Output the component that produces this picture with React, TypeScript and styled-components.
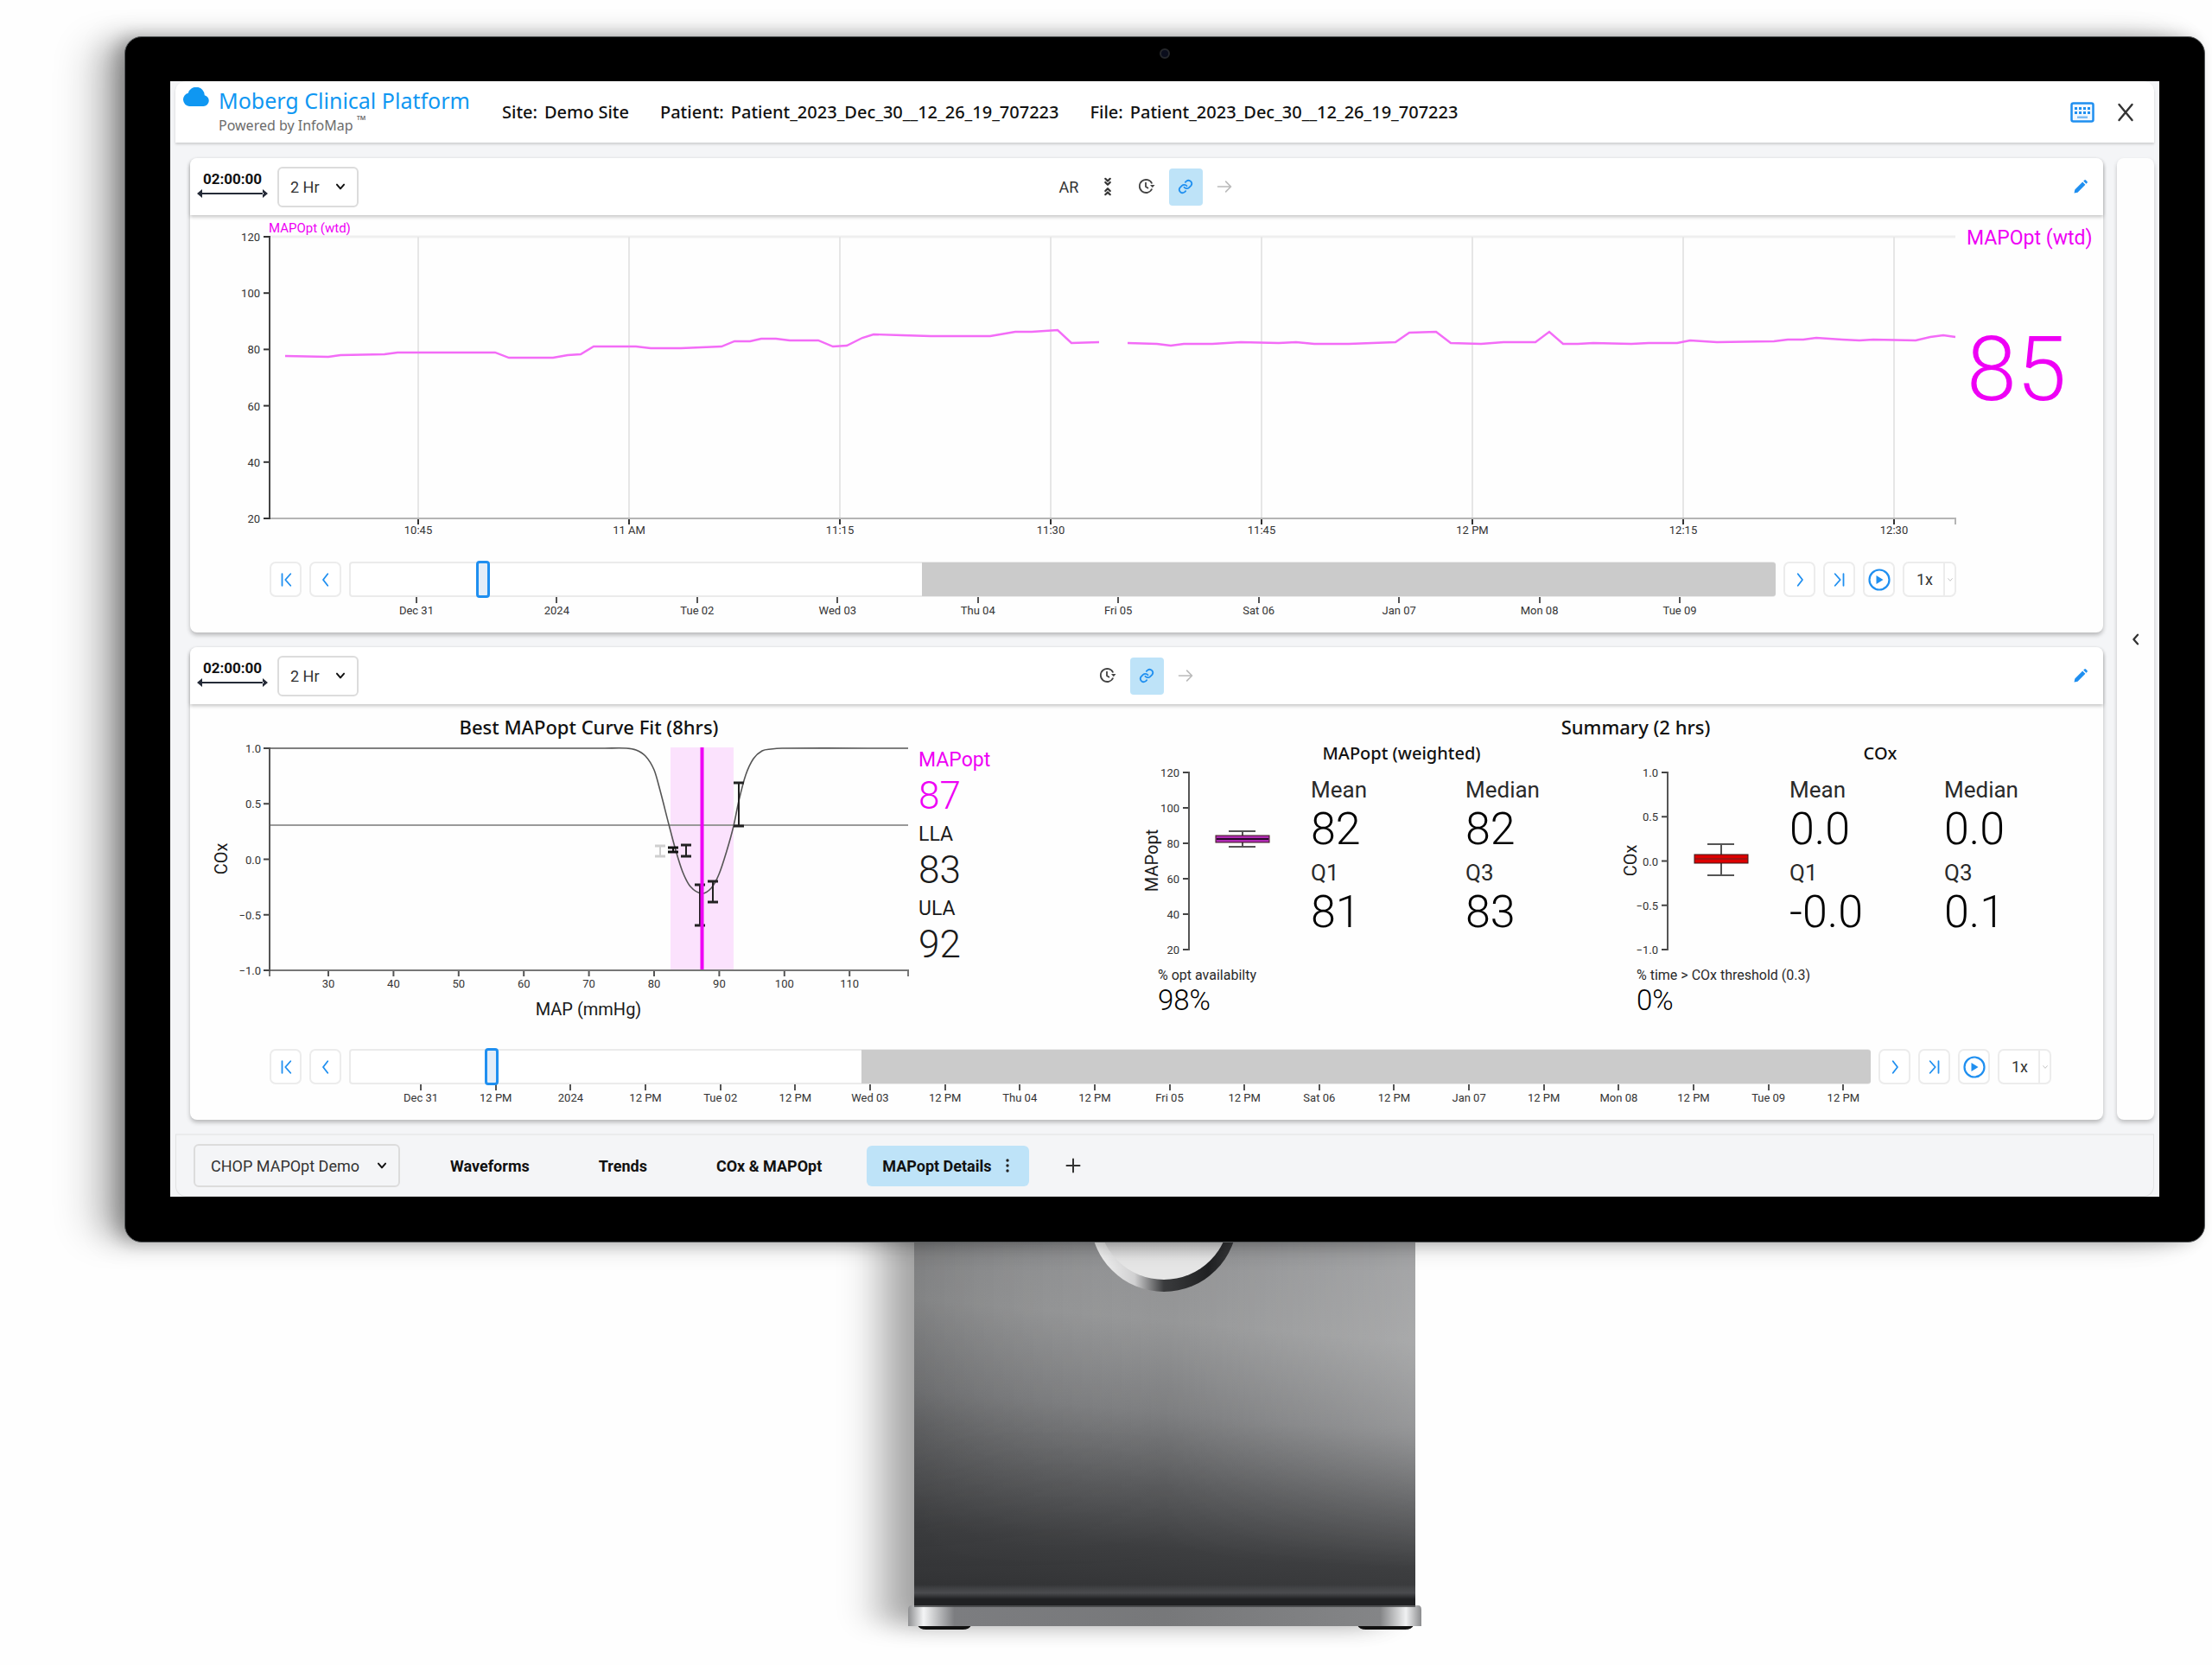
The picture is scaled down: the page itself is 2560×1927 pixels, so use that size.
import React from "react";
import styled, { createGlobalStyle } from "styled-components";

const BLUE = "#1f8ff0";
const MAGENTA = "#ee00f5";
const UI_FONT = 'Roboto, "Open Sans", sans-serif';
const HEADING_FONT = '"Noto Sans", "Open Sans", sans-serif';

const GlobalStyle = createGlobalStyle`
  *, *::before, *::after { box-sizing: border-box; }
  body { margin: 0; background: #fefefe; color: #111; font-family: ${UI_FONT}; }
  button, select, input { font: inherit; color: inherit; margin: 0; }
  h1, h2, h3, p, dl, dd, dt { margin: 0; font-weight: 400; }
`;

/* ---------- device ---------- */

const Stage = styled.div`
  display: flex;
  flex-direction: column;
  align-items: center;
  padding: 42px 8px 41px 144px;
  overflow: hidden;
`;

const Monitor = styled.div`
  position: relative;
  z-index: 1;
  display: flex;
  flex-direction: column;
  width: 100%;
  padding: 0 52px 52px;
  border: 1px solid #55585a;
  border-radius: 20px;
  background: #000;
  box-shadow: -52px 0 44px -8px rgba(0, 0, 0, 0.14), -24px 0 32px -4px rgba(0, 0, 0, 0.24), -8px 0 18px 0 rgba(0, 0, 0, 0.2);
`;

const CameraBar = styled.div`
  display: flex;
  align-items: center;
  justify-content: center;
  height: 51px;
  padding-bottom: 14px;
`;

const Camera = styled.span`
  width: 12px;
  height: 12px;
  border: 2px solid #26282c;
  border-radius: 50%;
  background: #0a0d1c;
`;

const Screen = styled.div`
  display: flex;
  flex-direction: column;
  padding: 0 6px;
  background: #f4f5f7;
`;

const StandDrawing = styled.svg`
  display: block;
  width: 660px;
  height: 448px;
  overflow: visible;
`;

/* ---------- header ---------- */

const Header = styled.header`
  display: flex;
  align-items: center;
  height: 71px;
  padding: 0 14px 0 9px;
  border-radius: 12px 12px 0 0;
  background: #fff;
  box-shadow: 0 2px 3px rgba(0, 0, 0, 0.16);
`;

const Brand = styled.div`
  display: flex;
  align-items: flex-start;
  gap: 11px;
  width: 369px;
`;

const BrandText = styled.div`
  display: flex;
  flex-direction: column;
  font-family: ${HEADING_FONT};
`;

const BrandName = styled.h1`
  font-size: 25px;
  line-height: 30px;
  color: #0f97f2;
  white-space: nowrap;
`;

const Powered = styled.p`
  font-size: 16px;
  line-height: 28px;
  color: #6c6c6c;
  sup { font-size: 14px; line-height: 10px; margin-left: 4px; }
`;

const Facts = styled.dl`
  display: flex;
  flex: 1;
  gap: 36px;
  font-family: ${HEADING_FONT};
  font-size: 20px;
  font-weight: 500;
  line-height: 28px;
  white-space: nowrap;
`;

const Fact = styled.div`
  display: flex;
  gap: 8px;
  dt, dd { font-weight: 500; }
`;

const HeaderActions = styled.div`
  display: flex;
  align-items: center;
  gap: 11px;
`;

const IconButton = styled.button<{ $active?: boolean; $tone?: string }>`
  display: inline-flex;
  align-items: center;
  justify-content: center;
  width: 39px;
  height: 43px;
  padding: 0;
  border: 0;
  border-radius: 4px;
  background: ${(p) => (p.$active ? "#bee3f8" : "transparent")};
  color: ${(p) => p.$tone || "#333"};
  font-size: 18px;
`;

/* ---------- panels ---------- */

const Main = styled.main`
  display: flex;
  gap: 16px;
  padding: 18px 0 16px 17px;
`;

const Panels = styled.div`
  display: flex;
  flex: 1;
  flex-direction: column;
  gap: 17px;
  min-width: 0;
`;

const Panel = styled.section`
  display: flex;
  flex-direction: column;
  border-radius: 8px;
  background: #fefefe;
  box-shadow: 0 3px 5px rgba(0, 0, 0, 0.25);
`;

const SideRail = styled.aside`
  display: flex;
  align-items: center;
  justify-content: center;
  width: 43px;
  border-radius: 8px;
  background: #fefefe;
  box-shadow: 0 3px 5px rgba(0, 0, 0, 0.22);
`;

const Toolbar = styled.div`
  display: grid;
  grid-template-columns: 1fr auto 1fr;
  align-items: center;
  height: 66px;
  padding: 0 7px;
  border-radius: 8px 8px 0 0;
  background: #fff;
  box-shadow: 0 2px 4px rgba(0, 0, 0, 0.24);
`;

const ToolGroup = styled.div<{ $end?: boolean }>`
  display: flex;
  align-items: center;
  gap: 6px;
  justify-content: ${(p) => (p.$end ? "flex-end" : "flex-start")};
`;

const Span = styled.div`
  display: flex;
  flex-direction: column;
  align-items: center;
  width: 84px;
  margin-right: 4px;
  padding-bottom: 5px;
  font-size: 17px;
  font-weight: 700;
  line-height: 21px;
`;

const SelectBox = styled.label<{ $width: number; $height: number; $plain?: boolean }>`
  position: relative;
  display: flex;
  align-items: center;
  width: ${(p) => p.$width}px;
  height: ${(p) => p.$height}px;
  border: 2px solid #dcdcdc;
  border-radius: 6px;
  background: ${(p) => (p.$plain ? "transparent" : "#fff")};
  svg { position: absolute; right: 12px; pointer-events: none; }
`;

const Select = styled.select<{ $pad: number }>`
  width: 100%;
  height: 100%;
  padding: 0 0 0 ${(p) => p.$pad}px;
  border: 0;
  background: transparent;
  appearance: none;
  font-size: 18px;
  color: #333;
`;

const TrendBody = styled.div`
  display: grid;
  grid-template-columns: minmax(0, 1fr) 168px;
`;

const Drawing = styled.svg`
  display: block;
  width: 100%;
  height: auto;
`;

const Tick = styled.text`
  font-family: ${UI_FONT};
  font-size: 13px;
  fill: #333;
`;

const AxisTitle = styled.text`
  font-family: ${UI_FONT};
  font-size: 20px;
  fill: #1a1a1a;
`;

const SeriesName = styled.text`
  font-family: ${UI_FONT};
  font-size: 15px;
  fill: ${MAGENTA};
`;

const TrendReading = styled.div`
  display: flex;
  flex-direction: column;
  gap: 76px;
  padding: 11px 0 0 10px;
  color: ${MAGENTA};
  white-space: nowrap;
`;

const ReadingName = styled.p`
  font-size: 23px;
  line-height: 32px;
`;

const ReadingValue = styled.p`
  font-size: 104px;
  font-weight: 300;
  line-height: 120px;
`;

/* ---------- timeline ---------- */

const TimelineRow = styled.div<{ $right: number; $top: number }>`
  display: flex;
  align-items: flex-start;
  gap: 9px;
  height: 82px;
  margin-top: ${(p) => p.$top}px;
  padding: 0 ${(p) => p.$right}px 0 92px;
`;

const StepButton = styled.button`
  display: inline-flex;
  align-items: center;
  justify-content: center;
  width: 37px;
  height: 41px;
  padding: 0;
  border: 2px solid #ececec;
  border-radius: 7px;
  background: #fff;
  color: ${BLUE};
`;

const TrackArea = styled.div`
  position: relative;
  flex: 1;
`;

const Track = styled.div`
  display: flex;
  justify-content: flex-end;
  height: 41px;
  border: 2px solid #ebebeb;
  border-radius: 4px;
  background: #fff;
`;

const Unloaded = styled.div`
  margin: -1px -2px -1px 0;
  border-radius: 0 3px 3px 0;
  background: #cbcbcb;
`;

const Scrubber = styled.input`
  position: absolute;
  top: -1px;
  left: 0;
  width: 100%;
  height: 43px;
  background: transparent;
  appearance: none;
  &::-webkit-slider-thumb {
    appearance: none;
    width: 16px;
    height: 43px;
    border: 3px solid ${BLUE};
    border-radius: 4px;
    background: #e3edf8;
  }
`;

const TimeMark = styled.span`
  position: absolute;
  top: 41px;
  display: flex;
  flex-direction: column;
  align-items: center;
  width: 80px;
  margin-left: -40px;
  font-size: 13px;
  line-height: 18px;
  color: #333;
  &::before { content: ""; width: 2px; height: 7px; background: #555; }
`;

const SpeedBox = styled(SelectBox)`
  border-color: #ececec;
  border-radius: 7px;
  color: #c4c4c4;
  &::after { content: ""; position: absolute; right: 11px; width: 2px; height: 100%; background: #ececec; }
  svg { right: 1px; }
`;

/* ---------- details panel ---------- */

const DetailBody = styled.div`
  display: grid;
  grid-template-columns: minmax(0, 835fr) minmax(0, 265fr) minmax(0, 1114fr);
  padding-top: 11px;
`;

const FigureTitle = styled.h2<{ $left: number }>`
  padding-left: ${(p) => p.$left}px;
  font-family: ${HEADING_FONT};
  font-size: 22px;
  font-weight: 500;
  line-height: 30px;
  text-align: center;
`;

const Limits = styled.dl`
  padding: 39px 0 0 8px;
`;

const Limit = styled.div<{ $tone?: string }>`
  color: ${(p) => p.$tone || "#1a1a1a"};
  dt { font-size: 23px; line-height: 30px; }
  dd { padding-bottom: 4px; font-size: 44px; font-weight: 300; line-height: 52px; }
`;

const Summary = styled.div`
  padding-right: 6px;
`;

const SummaryColumns = styled.div`
  display: grid;
  grid-template-columns: 1fr 1fr;
`;

const GroupTitle = styled.h3`
  padding: 2px 0 0 50px;
  font-family: ${HEADING_FONT};
  font-size: 20px;
  font-weight: 500;
  line-height: 28px;
  text-align: center;
`;

const GroupBody = styled.div`
  display: grid;
  grid-template-columns: 197px 1fr;
`;

const Stats = styled.dl`
  display: grid;
  grid-template-columns: 179px 1fr;
  align-content: start;
  padding-top: 11px;
`;

const Stat = styled.div`
  dt { font-size: 26px; line-height: 34px; color: #2a2a2a; }
  dd { padding-bottom: 4px; font-size: 52px; font-weight: 300; line-height: 58px; color: #000; }
`;

const Share = styled.dl`
  padding: 2px 0 0 20px;
  dt { font-size: 16px; line-height: 20px; color: #2a2a2a; }
  dd { font-size: 33px; font-weight: 300; line-height: 38px; color: #000; }
`;

/* ---------- footer ---------- */

const Footer = styled.footer`
  display: flex;
  align-items: center;
  height: 73px;
  padding-left: 20px;
  border: 1px solid #e2e3e4;
  border-top: 2px solid #eaebec;
  border-radius: 0 0 12px 12px;
`;

const Tabs = styled.nav`
  display: flex;
  gap: 44px;
  margin-left: 40px;
`;

const Tab = styled.button<{ $active?: boolean }>`
  display: inline-flex;
  align-items: center;
  gap: 11px;
  height: 47px;
  padding: 0 18px;
  margin-left: ${(p) => (p.$active ? "-10px" : "0")};
  border: 0;
  border-radius: 6px;
  background: ${(p) => (p.$active ? "#bee3f8" : "transparent")};
  font-size: 18px;
  font-weight: 700;
  color: #111;
`;

const AddButton = styled(IconButton)`
  margin-left: 32px;
`;

/* ---------- icons ---------- */

const Stroke = ({ d, size = 20, width = 2, vb = 24 }: { d: string; size?: number; width?: number; vb?: number }) => (
  <svg width={size} height={size} viewBox={`0 0 ${vb} ${vb}`} fill="none" stroke="currentColor" strokeWidth={width} strokeLinecap="round" strokeLinejoin="round" aria-hidden="true">
    <path d={d} />
  </svg>
);

const Chevron = ({ size = 18 }: { size?: number }) => <Stroke size={size} width={3.4} d="M5 8l7 8 7-8" />;

const CloudIcon = () => (
  <svg width="30" height="22" viewBox="0 0 30 22" fill="#0f97f2" aria-hidden="true">
    <path d="M7 22h16.500a6.500 6.500 0 0 0 1.300-12.800a9.700 9.700 0 0 0-19-2.500A7.800 7.800 0 0 0 7 22z" />
  </svg>
);

const KeyboardIcon = () => (
  <svg width="28" height="24" viewBox="0 0 28 24" aria-hidden="true">
    <rect x="1.500" y="1.500" width="25" height="21" rx="2" fill="#f2f8fe" stroke={BLUE} strokeWidth="2.500" />
    {[7, 12].map((y) => [5, 10, 15, 20].map((x) => <rect key={`${x}${y}`} x={x} y={y - 1} width="3" height="3" fill={BLUE} />))}
    <rect x="8" y="16.500" width="12" height="2.500" fill="#7dbdf5" />
  </svg>
);

const PencilIcon = () => (
  <svg width="18" height="18" viewBox="0 0 18 18" fill={BLUE} aria-hidden="true">
    <path d="M1.500 16.500l.8-4L11.200 3.600l3.200 3.200L5.500 15.700zM12.200 2.600l1.100-1.100a1.200 1.200 0 0 1 1.700 0l1.500 1.500a1.200 1.200 0 0 1 0 1.700l-1.100 1.100z" />
  </svg>
);

const ClockIcon = () => (
  <svg width="20" height="20" viewBox="0 0 20 20" fill="none" stroke="#444" strokeWidth="1.800" aria-hidden="true">
    <path d="M16.200 12.500A7.500 7.500 0 1 1 16.200 6.500M9 5v5l3 2" />
    <path d="M14 8h5.500l-2.700 3.200z" fill="#444" stroke="none" />
  </svg>
);

const LinkIcon = () => (
  <Stroke size={18} width={2.4} d="M10 13a5 5 0 0 0 7.500.5l3-3a5 5 0 0 0-7-7l-1.700 1.700M14 11a5 5 0 0 0-7.500-.5l-3 3a5 5 0 0 0 7 7l1.700-1.700" />
);

const CompressIcon = () => (
  <Stroke size={22} width={2.4} d="M9 2l3 3 3-3M9 6.500l3 3 3-3M9 17.500l3-3 3 3M9 22l3-3 3 3" />
);

const PlayIcon = () => (
  <svg width="26" height="26" viewBox="0 0 26 26" fill="none" aria-hidden="true">
    <circle cx="13" cy="13" r="11.500" stroke={BLUE} strokeWidth="2.200" />
    <path d="M9.500 8v10l8-5z" fill={BLUE} />
  </svg>
);

const SpanArrow = () => (
  <svg width="84" height="12" viewBox="0 0 84 12" fill="#252b38" aria-hidden="true">
    <path d="M1 6l6-5v10zM83 6l-6-5v10zM6 5h72v2H6z" />
  </svg>
);

/* ---------- data ---------- */

type Pt = [number, number];

const TRACE_A: Pt[] = [
  [330, 412], [380, 413], [394, 411], [445, 410], [460, 408], [573, 408], [589, 414], [640, 414], [657, 411], [672, 410],
  [687, 401], [736, 401], [753, 403], [788, 403], [835, 401], [850, 395], [868, 395], [881, 392], [898, 392], [914, 394],
  [947, 394], [964, 401], [980, 400], [998, 391], [1011, 387], [1044, 388], [1077, 389], [1146, 389], [1175, 384],
  [1194, 384], [1224, 382], [1240, 397], [1272, 396],
];
const TRACE_B: Pt[] = [
  [1305, 397], [1339, 398], [1355, 400], [1370, 398], [1403, 398], [1436, 396], [1480, 397], [1500, 396], [1521, 398],
  [1561, 398], [1615, 396], [1631, 385], [1662, 384], [1679, 397], [1714, 398], [1740, 396], [1777, 396], [1793, 384],
  [1809, 398], [1826, 398], [1844, 397], [1888, 398], [1908, 397], [1941, 397], [1956, 394], [1987, 396], [2053, 395],
  [2069, 393], [2087, 393], [2102, 391], [2132, 393], [2152, 394], [2168, 393], [2217, 394], [2234, 390], [2249, 388], [2263, 390],
];
const CURVE: Pt[] = [
  [312, 867], [700, 867], [725, 867], [736, 869], [747, 876], [757, 892], [764, 916], [774, 955], [782, 985], [790, 1010],
  [799, 1027], [812, 1035], [823, 1029], [832, 1013], [841, 986], [849, 957], [855, 928], [863, 898], [872, 879], [882, 870],
  [892, 868], [905, 867], [1051, 867],
];
const ERROR_BARS = [
  { x: 764, top: 980, bottom: 992, tone: "#cfcfcf" },
  { x: 779, top: 982, bottom: 987, tone: "#111" },
  { x: 794, top: 979, bottom: 992, tone: "#222" },
  { x: 810, top: 1025, bottom: 1072, tone: "#222" },
  { x: 825, top: 1021, bottom: 1045, tone: "#222" },
  { x: 855, top: 907, bottom: 957, tone: "#222" },
];

const line = (pts: Pt[]) => pts.map((p) => p.join(",")).join(" ");

const smooth = (pts: Pt[]) => {
  let d = `M${pts[0][0]} ${pts[0][1]}`;
  for (let i = 0; i < pts.length - 1; i++) {
    const a = pts[Math.max(0, i - 1)];
    const b = pts[i];
    const c = pts[i + 1];
    const e = pts[Math.min(pts.length - 1, i + 2)];
    const reach = Math.abs(c[0] - b[0]) / 3;
    const s1 = (c[1] - a[1]) / (c[0] - a[0] || 1);
    const s2 = (e[1] - b[1]) / (e[0] - b[0] || 1);
    d += ` C${b[0] + reach} ${b[1] + s1 * reach} ${c[0] - reach} ${c[1] - s2 * reach} ${c[0]} ${c[1]}`;
  }
  return d;
};

/* ---------- charts ---------- */

const TrendChart = () => (
  <Drawing viewBox="220 249 2046 390" role="img" aria-label="MAPOpt (wtd) trend">
    <path d="M312 274H2263" stroke="#efefef" strokeWidth="3" />
    {["10:45", "11 AM", "11:15", "11:30", "11:45", "12 PM", "12:15", "12:30"].map((t, i) => {
      const x = Math.round(484 + i * 244);
      return (
        <g key={t}>
          <path d={`M${x} 274V600`} stroke="#e6e6e6" strokeWidth="2" />
          <path d={`M${x} 600v7`} stroke="#333" strokeWidth="2" />
          <Tick x={x} y={618} textAnchor="middle">{t}</Tick>
        </g>
      );
    })}
    <path d="M312 600H2263v7" fill="none" stroke="#b5b5b5" strokeWidth="2" />
    {[120, 100, 80, 60, 40, 20].map((v, i) => {
      const y = 274 + i * 65.2;
      return (
        <g key={v}>
          <path d={`M305 ${y}h8`} stroke="#333" strokeWidth="2" />
          <Tick x={301} y={y + 5} textAnchor="end">{v}</Tick>
        </g>
      );
    })}
    <path d="M312 274V600" stroke="#444" strokeWidth="2" />
    <SeriesName x={311} y={269}>MAPOpt (wtd)</SeriesName>
    <polyline points={line(TRACE_A)} fill="none" stroke="#f36cf7" strokeWidth="2.400" />
    <polyline points={line(TRACE_B)} fill="none" stroke="#f36cf7" strokeWidth="2.400" />
  </Drawing>
);

const CurveChart = () => (
  <Drawing viewBox="220 857 835 328" role="img" aria-label="COx against MAP curve fit">
    <rect x="776" y="866" width="73" height="257" fill="#fbe2fd" />
    <path d="M312 956H1051" stroke="#999" strokeWidth="2" />
    <path d={smooth(CURVE)} fill="none" stroke="#555" strokeWidth="1.6" />
    {ERROR_BARS.map((b) => (
      <g key={b.x} stroke={b.tone}>
        <path d={`M${b.x} ${b.top}V${b.bottom}`} strokeWidth="2" />
        <path d={`M${b.x - 6} ${b.top}h12M${b.x - 6} ${b.bottom}h12`} strokeWidth="3" />
      </g>
    ))}
    <path d="M812.5 866V1123" stroke={MAGENTA} strokeWidth="4" />
    <path d="M312 1124H1051v7M312 1124v7" fill="none" stroke="#777" strokeWidth="2" />
    {["1.0", "0.5", "0.0", "−0.5", "−1.0"].map((t, i) => {
      const y = 867 + i * 64.25;
      return (
        <g key={t}>
          <path d={`M305 ${y}h8`} stroke="#444" strokeWidth="2" />
          <Tick x={302} y={y + 5} textAnchor="end">{t}</Tick>
        </g>
      );
    })}
    <path d="M312 867V1124" stroke="#555" strokeWidth="2" />
    {[30, 40, 50, 60, 70, 80, 90, 100, 110].map((v, i) => {
      const x = 380 + i * 75.4;
      return (
        <g key={v}>
          <path d={`M${x} 1125v6`} stroke="#555" strokeWidth="2" />
          <Tick x={x} y={1144} textAnchor="middle">{v}</Tick>
        </g>
      );
    })}
    <AxisTitle x={681} y={1176} textAnchor="middle">MAP (mmHg)</AxisTitle>
    <AxisTitle transform="translate(263 995) rotate(-90)" textAnchor="middle">COx</AxisTitle>
  </Drawing>
);

interface BoxProps {
  name: string;
  ticks: string[];
  low: number;
  high: number;
  q1: number;
  q3: number;
  median: number;
  fill: string;
  mid: string;
}

const BoxPlot = ({ name, ticks, low, high, q1, q3, median, fill, mid }: BoxProps) => (
  <Drawing viewBox="0 0 197 231" role="img" aria-label={`${name} box plot`}>
    {ticks.map((t, i) => {
      const y = 8 + (i * 205) / (ticks.length - 1);
      return (
        <g key={t}>
          <path d={`M49 ${y}h8`} stroke="#444" strokeWidth="2" />
          <Tick x={45} y={y + 5} textAnchor="end">{t}</Tick>
        </g>
      );
    })}
    <path d="M56 7V214" stroke="#555" strokeWidth="2" />
    <path d={`M118 ${high}V${low}M102 ${high}h31M102 ${low}h31`} stroke="#555" strokeWidth="2" />
    <rect x="87" y={q3} width="62" height={q1 - q3} fill={fill} stroke="#3a1a1a" strokeWidth="1" />
    <path d={`M88 ${median}h60`} stroke={mid} strokeWidth="2" />
    <AxisTitle transform="translate(20 110) rotate(-90)" textAnchor="middle">{name}</AxisTitle>
  </Drawing>
);

/* ---------- composed parts ---------- */

const Timeline = ({ labels, step, unloaded, right, top }: { labels: string[]; step: number; unloaded: number; right: number; top: number }) => (
  <TimelineRow $right={right} $top={top}>
    <StepButton aria-label="First"><Stroke size={18} width={2.4} d="M6 3v18M19 3l-8 9 8 9" /></StepButton>
    <StepButton aria-label="Previous"><Stroke size={18} width={2.4} d="M15 3l-7 9 7 9" /></StepButton>
    <TrackArea>
      <Track>
        <Unloaded style={{ width: `${unloaded}%` }} />
      </Track>
      {labels.map((t, i) => (
        <TimeMark key={i} style={{ left: `${4.72 + i * step}%` }}>{t}</TimeMark>
      ))}
      <Scrubber type="range" min={0} max={1000} defaultValue={90} aria-label="Time window" />
    </TrackArea>
    <StepButton aria-label="Next"><Stroke size={18} width={2.4} d="M9 3l7 9-7 9" /></StepButton>
    <StepButton aria-label="Last"><Stroke size={18} width={2.4} d="M18 3v18M5 3l8 9-8 9" /></StepButton>
    <StepButton aria-label="Play"><PlayIcon /></StepButton>
    <SpeedBox $width={62} $height={41}>
      <Select $pad={14} aria-label="Speed"><option>1x</option></Select>
      <Stroke size={8} width={3} d="M5 8l7 8 7-8" />
    </SpeedBox>
  </TimelineRow>
);

const PanelToolbar = ({ extended }: { extended?: boolean }) => (
  <Toolbar>
    <ToolGroup>
      <Span>02:00:00<SpanArrow /></Span>
      <SelectBox $width={94} $height={47}>
        <Select $pad={13} aria-label="Window length"><option>2 Hr</option></Select>
        <Chevron size={14} />
      </SelectBox>
    </ToolGroup>
    <ToolGroup>
      {extended && <IconButton>AR</IconButton>}
      {extended && <IconButton aria-label="Compress"><CompressIcon /></IconButton>}
      <IconButton aria-label="Time"><ClockIcon /></IconButton>
      <IconButton aria-label="Link" $active $tone={BLUE}><LinkIcon /></IconButton>
      <IconButton aria-label="Forward" $tone="#bbb"><Stroke size={20} d="M3 12h18M14 5l7 7-7 7" /></IconButton>
    </ToolGroup>
    <ToolGroup $end>
      <IconButton aria-label="Edit"><PencilIcon /></IconButton>
    </ToolGroup>
  </Toolbar>
);

const SummaryGroup = ({ title, stats, share, plot }: { title: string; stats: [string, string][]; share: [string, string]; plot: React.ReactNode }) => (
  <div>
    <GroupTitle>{title}</GroupTitle>
    <GroupBody>
      <div>{plot}</div>
      <Stats>
        {stats.map(([k, v]) => (
          <Stat key={k}><dt>{k}</dt><dd>{v}</dd></Stat>
        ))}
      </Stats>
    </GroupBody>
    <Share><dt>{share[0]}</dt><dd>{share[1]}</dd></Share>
  </div>
);

const Stand = () => (
  <StandDrawing viewBox="1018 1438 660 448" aria-hidden="true">
    <defs>
      <linearGradient id="body" x1="0.4" y1="0" x2="0.28" y2="1">
        <stop offset="0" stopColor="#8f9092" />
        <stop offset="0.2" stopColor="#949596" />
        <stop offset="0.45" stopColor="#7b7c7e" />
        <stop offset="0.65" stopColor="#58595b" />
        <stop offset="0.82" stopColor="#3d3e40" />
        <stop offset="1" stopColor="#303133" />
      </linearGradient>
      <linearGradient id="sheen" x1="0" y1="0" x2="1" y2="0">
        <stop offset="0" stopColor="#000" stopOpacity="0.12" />
        <stop offset="0.5" stopColor="#fff" stopOpacity="0.02" />
        <stop offset="1" stopColor="#fff" stopOpacity="0.2" />
      </linearGradient>
      <linearGradient id="sheenFade" x1="0" y1="0" x2="0" y2="1">
        <stop offset="0.5" stopColor="#fff" />
        <stop offset="0.9" stopColor="#000" />
      </linearGradient>
      <mask id="fade"><rect x="1058" y="1438" width="580" height="420" fill="url(#sheenFade)" /></mask>
      <linearGradient id="foot" x1="0" y1="0" x2="1" y2="0">
        <stop offset="0" stopColor="#8e8f91" />
        <stop offset="0.03" stopColor="#f4f5f6" />
        <stop offset="0.09" stopColor="#7c7d80" />
        <stop offset="0.5" stopColor="#77787a" />
        <stop offset="0.92" stopColor="#848587" />
        <stop offset="0.97" stopColor="#f0f1f2" />
        <stop offset="1" stopColor="#8b8c8e" />
      </linearGradient>
      <linearGradient id="ring" x1="0" y1="0" x2="1" y2="0">
        <stop offset="0.05" stopColor="#f4f4f4" />
        <stop offset="0.3" stopColor="#d0d0d1" />
        <stop offset="0.5" stopColor="#3a3b3d" />
        <stop offset="0.8" stopColor="#202123" />
        <stop offset="1" stopColor="#3d3e40" />
      </linearGradient>
      <linearGradient id="hollow" x1="0" y1="0" x2="0" y2="1">
        <stop offset="0.7" stopColor="#cfcfd0" />
        <stop offset="0.85" stopColor="#e6e6e6" />
      </linearGradient>
      <linearGradient id="bend" x1="0" y1="0" x2="0" y2="1">
        <stop offset="0" stopColor="#55575a" stopOpacity="0" />
        <stop offset="0.4" stopColor="#4a4b4e" />
        <stop offset="0.7" stopColor="#202123" />
        <stop offset="1" stopColor="#202123" />
      </linearGradient>
      <filter id="cast" x="-30%" y="-20%" width="160%" height="150%"><feGaussianBlur stdDeviation="22 14" /></filter>
      <clipPath id="below"><rect x="900" y="1438" width="900" height="500" /></clipPath>
    </defs>
    <path d="M1010 1400H1590V1880H1010z" fill="#000" opacity="0.2" filter="url(#cast)" />
    <path d="M1040 1400H1600V1880H1040z" fill="#000" opacity="0.22" filter="url(#cast)" />
    <rect x="1058" y="1438" width="580" height="420" fill="url(#body)" />
    <rect x="1058" y="1438" width="580" height="420" fill="url(#sheen)" mask="url(#fade)" />
    <rect x="1058" y="1834" width="580" height="24" fill="url(#bend)" />
    <g clipPath="url(#below)">
      <circle cx="1347" cy="1410" r="85" fill="url(#ring)" />
      <circle cx="1347" cy="1405" r="76" fill="url(#hollow)" />
    </g>
    <path d="M1062 1881h62q-2 5-10 5h-42q-8 0-10-5zM1571 1881h65q-2 5-10 5h-45q-8 0-10-5z" fill="#111" />
    <path d="M1055 1858h586q4 0 4 5v19h-594v-19q0-5 4-5z" fill="url(#foot)" />
    <path d="M1058 1859h580" stroke="#3a3b3d" strokeWidth="1.5" />
  </StandDrawing>
);

const DAYS = ["Dec 31", "2024", "Tue 02", "Wed 03", "Thu 04", "Fri 05", "Sat 06", "Jan 07", "Mon 08", "Tue 09"];
const HALF_DAYS = DAYS.flatMap((d) => [d, "12 PM"]);
const RECORDING = "Patient_2023_Dec_30__12_26_19_707223";

export default function App() {
  return (
    <Stage>
      <GlobalStyle />
      <Monitor>
        <CameraBar><Camera /></CameraBar>
        <Screen>
          <Header>
            <Brand>
              <CloudIcon />
              <BrandText>
                <BrandName>Moberg Clinical Platform</BrandName>
                <Powered>Powered by InfoMap<sup>™</sup></Powered>
              </BrandText>
            </Brand>
            <Facts>
              <Fact><dt>Site:</dt><dd>Demo Site</dd></Fact>
              <Fact><dt>Patient:</dt><dd>{RECORDING}</dd></Fact>
              <Fact><dt>File:</dt><dd>{RECORDING}</dd></Fact>
            </Facts>
            <HeaderActions>
              <IconButton aria-label="Keyboard"><KeyboardIcon /></IconButton>
              <IconButton aria-label="Close"><Stroke size={24} width={2.4} d="M4.500 3l15 18M19.500 3l-15 18" /></IconButton>
            </HeaderActions>
          </Header>
          <Main>
            <Panels>
              <Panel>
                <PanelToolbar extended />
                <TrendBody>
                  <TrendChart />
                  <TrendReading>
                    <ReadingName>MAPOpt (wtd)</ReadingName>
                    <ReadingValue>85</ReadingValue>
                  </TrendReading>
                </TrendBody>
                <Timeline labels={DAYS} step={9.84} unloaded={60} right={170} top={11} />
              </Panel>
              <Panel>
                <PanelToolbar />
                <DetailBody>
                  <div>
                    <FigureTitle $left={88}>Best MAPopt Curve Fit (8hrs)</FigureTitle>
                    <CurveChart />
                  </div>
                  <Limits>
                    <Limit $tone={MAGENTA}><dt>MAPopt</dt><dd>87</dd></Limit>
                    <Limit><dt>LLA</dt><dd>83</dd></Limit>
                    <Limit><dt>ULA</dt><dd>92</dd></Limit>
                  </Limits>
                  <Summary>
                    <FigureTitle $left={38}>Summary (2 hrs)</FigureTitle>
                    <SummaryColumns>
                      <SummaryGroup
                        title="MAPopt (weighted)"
                        stats={[["Mean", "82"], ["Median", "82"], ["Q1", "81"], ["Q3", "83"]]}
                        share={["% opt availabilty", "98%"]}
                        plot={<BoxPlot name="MAPopt" ticks={["120", "100", "80", "60", "40", "20"]} high={76} low={94} q3={81} q1={89} median={85} fill="#b02cb4" mid="#2a082a" />}
                      />
                      <SummaryGroup
                        title="COx"
                        stats={[["Mean", "0.0"], ["Median", "0.0"], ["Q1", "-0.0"], ["Q3", "0.1"]]}
                        share={["% time > COx threshold (0.3)", "0%"]}
                        plot={<BoxPlot name="COx" ticks={["1.0", "0.5", "0.0", "−0.5", "−1.0"]} high={91} low={127} q3={103} q1={113} median={108} fill="#dc0000" mid="#a01212" />}
                      />
                    </SummaryColumns>
                  </Summary>
                </DetailBody>
                <Timeline labels={HALF_DAYS} step={4.92} unloaded={66.5} right={60} top={30} />
              </Panel>
            </Panels>
            <SideRail>
              <IconButton aria-label="Expand side panel"><Stroke size={16} width={3.4} d="M15 4l-7 8 7 8" /></IconButton>
            </SideRail>
          </Main>
          <Footer>
            <SelectBox $width={239} $height={50} $plain>
              <Select $pad={18} aria-label="Layout"><option>CHOP MAPOpt Demo</option></Select>
              <Chevron size={14} />
            </SelectBox>
            <Tabs>
              <Tab>Waveforms</Tab>
              <Tab>Trends</Tab>
              <Tab>COx &amp; MAPOpt</Tab>
              <Tab $active>
                MAPopt Details
                <svg width="14" height="16" viewBox="0 0 14 16" aria-hidden="true">
                  {[2, 8, 14].map((y) => <circle key={y} cx="7" cy={y} r="1.700" fill="#222" />)}
                </svg>
              </Tab>
            </Tabs>
            <AddButton aria-label="Add tab"><Stroke size={20} width={2.4} d="M12 3v18M3 12h18" /></AddButton>
          </Footer>
        </Screen>
      </Monitor>
      <Stand />
    </Stage>
  );
}
